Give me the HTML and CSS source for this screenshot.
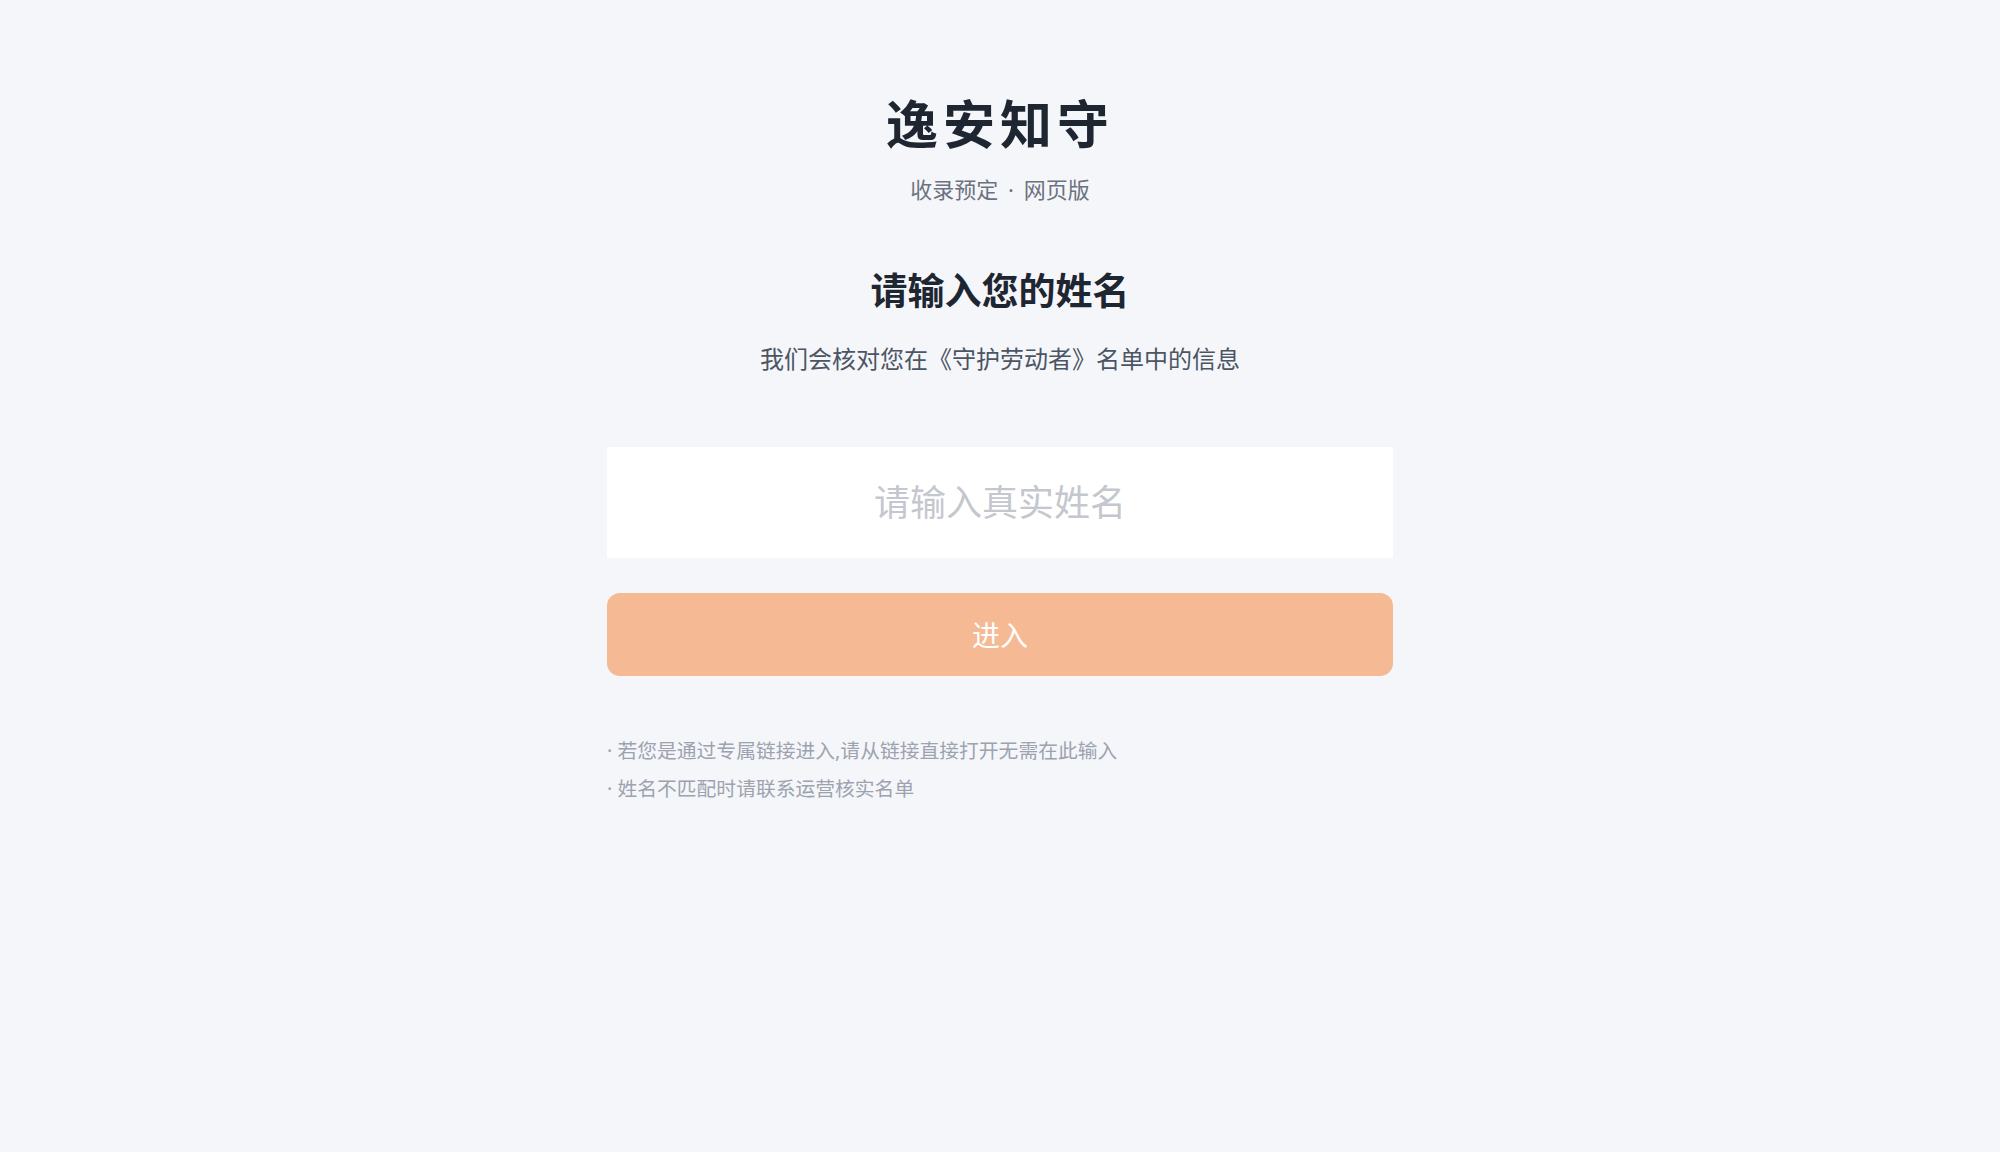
FILE: index.html
```html
<!DOCTYPE html>
<html lang="zh-CN">
<head>
<meta charset="utf-8">
<title>逸安知守</title>
<link rel="stylesheet" href="styles.css">
</head>
<body>
<main class="page">
  <header class="brand">
    <h1 class="brand-title">逸安知守</h1>
    <p class="brand-sub">收录预定 <span class="sep">·</span> 网页版</p>
  </header>
  <section class="intro">
    <h2 class="intro-title">请输入您的姓名</h2>
    <p class="intro-desc">我们会核对您在《守护劳动者》名单中的信息</p>
  </section>
  <form class="login" onsubmit="return false;">
    <input class="name-input" type="text" placeholder="请输入真实姓名">
    <button class="enter-btn" type="submit">进入</button>
  </form>
  <ul class="notes">
    <li>若您是通过专属链接进入,请从链接直接打开无需在此输入</li>
    <li>姓名不匹配时请联系运营核实名单</li>
  </ul>
</main>
</body>
</html>
```
FILE: styles.css
```css
html, body {
  margin: 0;
  padding: 0;
}
body {
  background: #f5f6fa;
  font-family: "Noto Sans", "Noto Sans CJK SC", sans-serif;
  min-height: 1152px;
}
.page {
  width: 786px;
  margin: 0 auto;
  padding-top: 90px;
  display: flex;
  flex-direction: column;
}
.brand {
  text-align: center;
}
.brand-title {
  margin: 0;
  font-family: "Noto Sans CJK SC", sans-serif;
  font-size: 52px;
  line-height: 64px;
  font-weight: 700;
  letter-spacing: 5px;
  color: #1e2632;
}
.brand-sub {
  margin: 20px 0 0;
  font-size: 22px;
  line-height: 30px;
  color: #6b7280;
}
.sep {
  margin: 0 4px;
}
.intro {
  text-align: center;
  margin-top: 61px;
}
.intro-title {
  margin: 0;
  font-family: "Noto Sans CJK SC", sans-serif;
  font-size: 37px;
  line-height: 48px;
  font-weight: 700;
  color: #1e2632;
}
.intro-desc {
  margin: 30px 0 0;
  font-size: 24px;
  line-height: 32px;
  color: #4b5563;
}
.login {
  margin-top: 72px;
  display: flex;
  flex-direction: column;
  gap: 35px;
}
.name-input {
  box-sizing: border-box;
  width: 100%;
  height: 111px;
  border: none;
  outline: none;
  background: #ffffff;
  border-radius: 0;
  text-align: center;
  font-family: "Noto Sans CJK SC", "Noto Sans", sans-serif;
  font-size: 36px;
  color: #1e2632;
  padding: 0 20px 5px;
}
.name-input::placeholder {
  color: #c4c7cd;
}
.enter-btn {
  height: 83px;
  border: none;
  border-radius: 13px;
  background: #f5b993;
  color: #ffffff;
  font-family: "Noto Sans CJK SC", "Noto Sans", sans-serif;
  font-size: 28px;
  padding: 0 0 2px;
  cursor: pointer;
}
.notes {
  list-style: none;
  margin: 56px 0 0;
  padding: 0;
  font-size: 19.8px;
  line-height: 38px;
  color: #9ca3af;
}
.notes li::before {
  content: "· ";
}
```
